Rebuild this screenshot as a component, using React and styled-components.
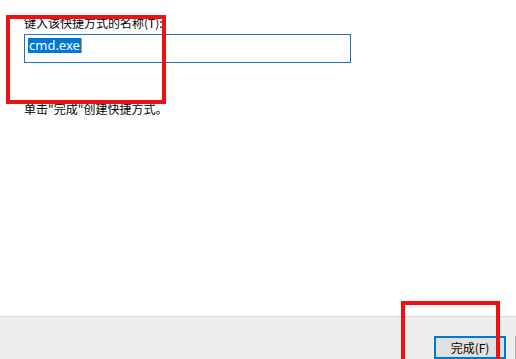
import React from 'react';
import styled, { createGlobalStyle } from 'styled-components';

const GlobalStyle = createGlobalStyle`
  html, body {
    margin: 0;
    padding: 0;
    height: 100%;
    background: #ffffff;
    overflow: hidden;
  }
  #root {
    height: 100%;
  }
`;

const Wizard = styled.div`
  position: relative;
  display: flex;
  flex-direction: column;
  height: 100vh;
  overflow: hidden;
  font-family: "Noto Sans CJK SC", "Noto Sans", sans-serif;
  font-size: 12px;
  color: #000;
`;

const Body = styled.div`
  flex: 1;
  padding: 14px 24px 0;
`;

const Label = styled.div`
  line-height: 18px;
  margin-bottom: 2px;
`;

const NameField = styled.div`
  box-sizing: border-box;
  display: flex;
  align-items: flex-start;
  width: 327px;
  height: 29px;
  padding: 3px 0 0 3px;
  border: 1px solid #1a73c8;
  background: #fff;
`;

const Selected = styled.span`
  font-family: "Noto Sans", "Open Sans", sans-serif;
  font-size: 13px;
  line-height: 15px;
  height: 15px;
  padding: 0 1px;
  background: #0078d7;
  color: #fff;
`;

const Caret = styled.span`
  width: 1px;
  height: 15px;
  background: #c9955a;
`;

const Hint = styled.div`
  margin-top: 37px;
  line-height: 18px;
`;

const Footer = styled.div`
  flex: 0 0 37px;
  display: flex;
  justify-content: flex-end;
  align-items: flex-start;
  gap: 9px;
  padding-top: 19px;
  margin-right: -71px;
  background: #eeeeee;
  border-top: 1px solid #dadada;
  box-sizing: border-box;
`;

const Button = styled.button`
  box-sizing: border-box;
  flex: 0 0 auto;
  width: 72px;
  height: 23px;
  padding: 0;
  font-family: "Noto Sans CJK SC", "Noto Sans", sans-serif;
  font-size: 12px;
  color: #000;
  background: #e1e1e1;
  border: ${p => (p.$focused ? '2px solid #0078d7' : '1px solid #adadad')};
`;

const Marker = styled.div`
  position: absolute;
  box-sizing: border-box;
  border: 4px solid #f01010;
  left: ${p => p.$x}px;
  top: ${p => p.$y}px;
  width: ${p => p.$w}px;
  height: ${p => p.$h}px;
`;

export default function App() {
  return (
    <>
      <GlobalStyle />
      <Wizard>
        <Body>
          <Label>键入该快捷方式的名称(T):</Label>
          <NameField>
            <Selected>cmd.exe</Selected>
            <Caret />
          </NameField>
          <Hint>单击"完成"创建快捷方式。</Hint>
        </Body>
        <Footer>
          <Button $focused>完成(F)</Button>
          <Button aria-label="取消" />
        </Footer>
        <Marker $x={6} $y={15} $w={160} $h={89} />
        <Marker $x={401} $y={301} $w={99} $h={70} />
      </Wizard>
    </>
  );
}
